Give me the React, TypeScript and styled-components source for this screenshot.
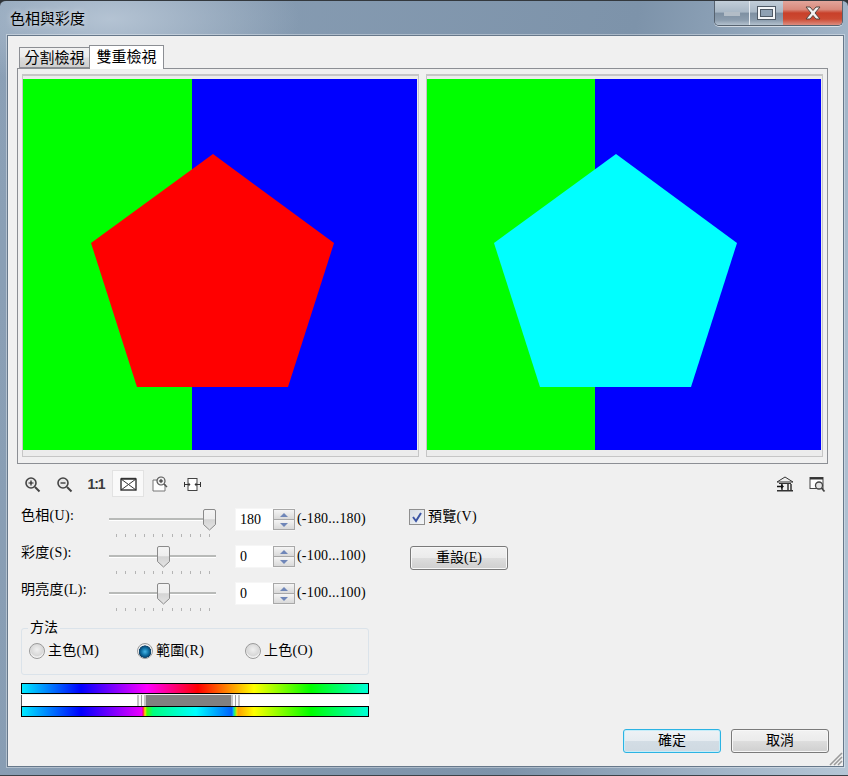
import React, { useId } from 'react'
import styled, { createGlobalStyle } from 'styled-components'

const GlobalStyle = createGlobalStyle`
  html, body { margin: 0; padding: 0; background: #2f3338; }
  body { font-family: "Liberation Serif", "Noto Sans CJK TC", serif; color: #000; }
`

const Win = styled.div`
  position: relative;
  width: 848px;
  height: 776px;
  box-sizing: border-box;
  padding: 0 5px 9px 8px;
  display: flex;
  flex-direction: column;
  border-top: 1px solid #33383d;
  border-bottom: 1px solid #3c4248;
  border-radius: 6px 6px 0 0;
  background:
    radial-gradient(ellipse 190px 70px at 110px 18px, #b4c3d3 0%, rgba(180,195,211,0) 100%),
    linear-gradient(100deg, #8ba0b6 0%, #7d93aa 65%, #a3b6c9 88%, #b5c6d6 100%);
`

const TitleBar = styled.div`
  height: 35px;
  flex: none;
  display: flex;
  justify-content: space-between;
  align-items: flex-start;
  margin-left: -8px;
  margin-right: -5px;
  padding: 0 5px 0 10px;
`

const Title = styled.div`
  font-size: 15px;
  line-height: 20px;
  margin-top: 8px;
  text-shadow: 0 0 6px rgba(255,255,255,.7);
`

const Caption = styled.div`
  display: flex;
  height: 25px;
  box-sizing: border-box;
  border: 1px solid #56626f;
  border-top: none;
  border-radius: 0 0 5px 5px;
  box-shadow: 0 1px 0 rgba(255,255,255,.6);
  overflow: hidden;
`

const CapBtn = styled.div<{ $w: number; $close?: boolean }>`
  width: ${(p) => p.$w}px;
  display: flex;
  align-items: center;
  justify-content: center;
  border-left: ${(p) => (p.$close ? 'none' : '1px solid #e4eaf0')};
  background: ${(p) =>
    p.$close
      ? 'linear-gradient(#e2a59b 0%, #d98a7c 35%, #c8402a 50%, #cc4a32 75%, #dc8d80 100%)'
      : 'linear-gradient(#c2ced9 0%, #a9b8c6 45%, #7f91a3 52%, #8c9dae 80%, #b4c2cf 100%)'};
  &:first-child { border-left: none; }
`

const MinGlyph = styled.div`
  width: 16px;
  height: 4px;
  margin-top: 2px;
  background: #b3bdc7;
`

const MaxGlyph = styled.div`
  width: 17px;
  height: 12px;
  box-sizing: border-box;
  border: 2px solid #f4f6f8;
  outline: 1px solid #4f5a66;
  box-shadow: inset 0 0 0 1px #4f5a66;
  background: #8fa1b3;
`

const Client = styled.div`
  flex: 1;
  display: flex;
  flex-direction: column;
  background: #f0f0f0;
  box-shadow: 0 0 0 1px #67788a, 0 0 0 2px rgba(255,255,255,.35);
  position: relative;
`

const Tabs = styled.div`
  display: flex;
  align-items: flex-end;
  height: 23px;
  margin: 9px 0 0 11px;
  position: relative;
  z-index: 1;
`

const Tab = styled.div<{ $active?: boolean }>`
  box-sizing: border-box;
  font-size: 15px;
  text-align: center;
  width: ${(p) => (p.$active ? 75 : 70)}px;
  height: ${(p) => (p.$active ? 24 : 21)}px;
  line-height: ${(p) => (p.$active ? 22 : 21)}px;
  margin-bottom: ${(p) => (p.$active ? -1 : 0)}px;
  border: 1px solid #8c8f94;
  border-bottom: ${(p) => (p.$active ? 'none' : '1px solid #8c8f94')};
  border-right: ${(p) => (p.$active ? '1px solid #8c8f94' : 'none')};
  background: ${(p) => (p.$active ? '#fff' : 'linear-gradient(#f2f2f2 0%, #ebebeb 45%, #dcdcdc 55%, #cfcfcf 100%)')};
`

const Panel = styled.div`
  box-sizing: border-box;
  width: 811px;
  height: 396px;
  margin-left: 9px;
  padding: 5px 0 0 4px;
  border: 1px solid #8c8f94;
  display: flex;
  gap: 7px;
`

const PreviewFrame = styled.div`
  box-sizing: border-box;
  width: 397px;
  height: 383px;
  padding: 3px 0 0 0;
  border: 1px solid #c6c6c6;
  border-top-width: 2px;
  background: #ececec;
`

const PreviewSvg = styled.svg`
  display: block;
  width: 394px;
  height: 371px;
`

const ToolRow = styled.div`
  display: flex;
  align-items: center;
  height: 27px;
  margin-top: 6px;
  padding: 0 10px 0 8px;
`

const ToolBtn = styled.div<{ $on?: boolean }>`
  width: 32px;
  height: 27px;
  display: flex;
  align-items: center;
  justify-content: center;
  box-sizing: border-box;
  font: 700 14px "Liberation Sans", sans-serif;
  letter-spacing: -1px;
  color: #3c3c3c;
  padding-top: 1px;
  background: ${(p) => (p.$on ? '#f9f9f9' : 'transparent')};
  border: ${(p) => (p.$on ? '1px solid #e2e2e2' : 'none')};
`

const Spacer = styled.div`
  flex: 1;
`

const Controls = styled.div`
  display: flex;
  margin: 11px 0 0 13px;
`

const LeftCol = styled.div`
  width: 348px;
  display: flex;
  flex-direction: column;
  gap: 14px;
`

const SliderRow = styled.div`
  height: 23px;
  display: flex;
  align-items: flex-start;
`

const Label = styled.div`
  width: 88px;
  font-size: 14px;
  line-height: 16px;
  letter-spacing: .3px;
`

const SliderBox = styled.div`
  position: relative;
  width: 107px;
  height: 30px;
  margin-right: 19px;
`

const Track = styled.div`
  height: 2px;
  margin-top: 10px;
  background: #b8bab8;
  border-bottom: 1px solid #fff;
`

const Ticks = styled.div`
  display: flex;
  justify-content: space-between;
  margin: 13px 6px 0 7px;
`

const Tick = styled.div`
  width: 1px;
  height: 3px;
  background: #b4b4b4;
`

const ThumbSvg = styled.svg`
  position: absolute;
  top: 1px;
`

const Spin = styled.div`
  box-sizing: border-box;
  width: 60px;
  height: 23px;
  display: flex;
  background: #fff;
  border: 1px solid #f6f6f6;
  border-right: none;
  font-size: 14px;
  line-height: 21px;
  padding-left: 4px;
`

const SpinValue = styled.div`
  flex: 1;
`

const SpinBtns = styled.div`
  width: 20px;
  display: flex;
  flex-direction: column;
  gap: 1px;
  border: 1px solid #a8a8a8;
  background: #a8a8a8;
`

const SpinBtn = styled.div<{ $up?: boolean }>`
  flex: 1;
  display: flex;
  align-items: center;
  justify-content: center;
  background: linear-gradient(#f5f5f5, #d9d9d9);
  &::after {
    content: "";
    border-left: 4px solid transparent;
    border-right: 4px solid transparent;
    ${(p) => (p.$up ? 'border-bottom: 4px solid #6f86b8;' : 'border-top: 4px solid #6f86b8;')}
  }
`

const RangeText = styled.div`
  font-size: 14px;
  line-height: 21px;
  margin-left: 2px;
  letter-spacing: .2px;
  white-space: nowrap;
`

const Group = styled.div`
  position: relative;
  box-sizing: border-box;
  width: 348px;
  height: 47px;
  margin-top: 15px;
  border: 1px solid #dbe3ea;
  border-radius: 3px;
  display: flex;
  align-items: flex-start;
  padding: 14px 0 0 7px;
`

const Legend = styled.div`
  position: absolute;
  top: -10px;
  left: 6px;
  padding: 0 2px;
  font-size: 14px;
  line-height: 17px;
  background: #f0f0f0;
`

const RadioItem = styled.div`
  width: 108px;
  display: flex;
  align-items: center;
  gap: 3px;
  font-size: 14px;
  line-height: 16px;
  letter-spacing: .3px;
`

const RadioDot = styled.div<{ $on?: boolean }>`
  width: 16px;
  height: 16px;
  flex: none;
  border-radius: 50%;
  box-sizing: border-box;
  border: 1px solid #9a9a9a;
  background: ${(p) =>
    p.$on
      ? 'radial-gradient(circle at 50% 55%, #46b6e8 0%, #0b6a9e 38%, #0d3f66 58%, #eef0f2 62%)'
      : 'radial-gradient(circle at 50% 40%, #f0f0f0 0%, #d8d8d8 55%, #f4f4f4 70%)'};
`

const RightCol = styled.div`
  margin-left: 40px;
  display: flex;
  flex-direction: column;
  align-items: flex-start;
`

const CheckRow = styled.div`
  display: flex;
  align-items: center;
  gap: 3px;
  font-size: 14px;
  line-height: 16px;
  letter-spacing: .3px;
  margin-top: 1px;
`

const CheckBox = styled.div`
  width: 16px;
  height: 16px;
  box-sizing: border-box;
  border: 1px solid #8f8f8f;
  background: linear-gradient(135deg, #d4dbe4, #f4f6f8);
  display: flex;
  align-items: center;
  justify-content: center;
`

const Btn = styled.div<{ $primary?: boolean }>`
  box-sizing: border-box;
  width: 98px;
  height: 24px;
  border-radius: 3px;
  border: 1px solid ${(p) => (p.$primary ? '#2bb3e3' : '#7a7a7a')};
  box-shadow: inset 0 0 0 1px ${(p) => (p.$primary ? '#c5edf9' : '#f7f7f7')};
  background: ${(p) =>
    p.$primary
      ? 'linear-gradient(#eef2f5 0%, #e6ecf1 48%, #d3dde5 52%, #cfd9e1 100%)'
      : 'linear-gradient(#f2f2f2 0%, #ebebeb 48%, #dddddd 52%, #cfcfcf 100%)'};
  font-size: 14px;
  line-height: 22px;
  text-align: center;
`

const ResetBtn = styled(Btn)`
  margin: 21px 0 0 1px;
`

const Bars = styled.div`
  width: 348px;
  margin: 8px 0 0 13px;
  display: flex;
  flex-direction: column;
`

const HueBar = styled.div<{ $grad: string }>`
  box-sizing: border-box;
  height: 11px;
  border: 1px solid #000;
  background: ${(p) => p.$grad};
`

const RangeTrack = styled.div`
  height: 11px;
  margin-top: 1px;
  background: #fff;
  border-left: 1px solid #555;
  box-sizing: border-box;
  position: relative;
`

const RangeFill = styled.div`
  position: absolute;
  top: 0;
  bottom: 0;
  left: 124px;
  width: 86px;
  background: #808080;
`

const RangeHandle = styled.div`
  position: absolute;
  top: 0;
  bottom: 0;
  width: 9px;
  background: linear-gradient(90deg, #c4c4c4 0 2px, #fafafa 2px 4px, #a0a0a0 4px 5px, #fafafa 5px 7px, #c4c4c4 7px 9px);
`

const Footer = styled.div`
  display: flex;
  justify-content: flex-end;
  gap: 10px;
  margin-top: 12px;
  padding-right: 14px;
`

const Grip = styled.svg`
  position: absolute;
  right: 0;
  bottom: 0;
`

const hueTop =
  'linear-gradient(90deg, #00eaff 0, #0000ff 59px, #ff00ff 125px, #ff0000 176px, #ffff00 232px, #00ff00 289px, #00ffd8 346px)'
const hueBottom =
  'linear-gradient(90deg, #00eaff 0, #0000ff 59px, #ee00ff 120px, #ff0050 121px, #ffe000 123px, #40ff00 125px, #00ff80 131px, #00ffff 174px, #0060ff 210px, #00b0ff 211px, #40ff40 213px, #ffd000 215px, #ffa000 216px, #ffff00 232px, #00ff00 289px, #00ffd8 346px)'

function Preview({ fill, shift = 0 }: { fill: string; shift?: number }) {
  return (
    <PreviewFrame>
      <PreviewSvg viewBox={`${shift} 0 394 371`}>
        <rect x="0" y="0" width="169" height="371" fill="#00ff00" />
        <rect x="169" y="0" width="226" height="371" fill="#0000ff" />
        <polygon points="190,75 311,164 265,308 114,308 68,164" fill={fill} />
      </PreviewSvg>
    </PreviewFrame>
  )
}

function ZoomIcon({ plus }: { plus?: boolean }) {
  return (
    <svg width="17" height="17" viewBox="0 0 17 17">
      <circle cx="7" cy="7" r="5" fill="#e8e8e8" stroke="#444" strokeWidth="1.6" />
      <path d="M11 11l4.5 4.5" stroke="#444" strokeWidth="2" />
      <path d={plus ? 'M4.5 7h5M7 4.5v5' : 'M4.5 7h5'} stroke="#222" strokeWidth="1.2" />
    </svg>
  )
}

function FitIcon() {
  return (
    <svg width="17" height="15" viewBox="0 0 17 15">
      <rect x="1" y="2" width="15" height="11" fill="#fff" stroke="#333" strokeWidth="1.4" />
      <path d="M1 2l7.500 5.500L16 2M1 13l7.500-5.500L16 13" fill="none" stroke="#333" />
      <path d="M1 1.500h15" stroke="#333" strokeWidth="1.400" />
    </svg>
  )
}

function ZoomRectIcon() {
  return (
    <svg width="18" height="18" viewBox="0 0 18 18">
      <path d="M2 5h6M2 5v11h12V9" fill="#fff" stroke="#777" />
      <circle cx="10" cy="6" r="4" fill="#eee" stroke="#555" strokeWidth="1.2" />
      <path d="M13 9l3 3" stroke="#555" strokeWidth="1.5" />
      <path d="M8 6h4M10 4v4" stroke="#222" />
    </svg>
  )
}

function SplitIcon() {
  return (
    <svg width="17" height="15" viewBox="0 0 17 15">
      <rect x="4" y="1.500" width="9" height="12" fill="#fff" stroke="#444" />
      <path d="M0.500 5v5M16.500 5v5M1 7.500h5M11 7.500h5" stroke="#333" />
      <path d="M6.500 7.500l-2-2v4zM10.500 7.500l2-2v4z" fill="#333" />
    </svg>
  )
}

function ExportIcon() {
  return (
    <svg width="18" height="17" viewBox="0 0 18 17">
      <path d="M9 1L1 6h16z" fill="#eee" stroke="#333" />
      <path d="M3 7h12v1H3zM1 14h16v1.500H1z" fill="#333" />
      <path d="M6 8v6M12 8v6M15 8v6" stroke="#333" strokeWidth="1.500" />
      <path d="M1 10.500h5" stroke="#111" strokeWidth="1.500" />
      <path d="M8 10.500l-3-2.500v5z" fill="#111" />
    </svg>
  )
}

function WindowZoomIcon() {
  return (
    <svg width="17" height="17" viewBox="0 0 17 17">
      <rect x="1" y="1.500" width="13" height="11" fill="#fff" stroke="#444" />
      <path d="M1 2.500h13" stroke="#333" strokeWidth="2" />
      <circle cx="10" cy="9.500" r="3.500" fill="#e4e4e4" stroke="#444" strokeWidth="1.300" />
      <path d="M12.500 12l3 3.500" stroke="#444" strokeWidth="1.800" />
    </svg>
  )
}

function SliderLine({ label, thumb, value, range }: { label: string; thumb: number; value: string; range: string }) {
  const gradId = useId()
  return (
    <SliderRow>
      <Label>{label}</Label>
      <SliderBox>
        <Track />
        <Ticks>
          {Array.from({ length: 11 }).map((_, i) => (
            <Tick key={i} />
          ))}
        </Ticks>
        <ThumbSvg width="13" height="22" viewBox="0 0 13 22" style={{ left: thumb - 6 }}>
          <defs>
            <linearGradient id={gradId} x1="0" y1="0" x2="0" y2="1">
              <stop offset="0" stopColor="#f4f4f4" />
              <stop offset="0.45" stopColor="#eeeeee" />
              <stop offset="0.5" stopColor="#d4d4d4" />
              <stop offset="1" stopColor="#e4e4e4" />
            </linearGradient>
          </defs>
          <path d="M2 0.500h9a1.500 1.500 0 0 1 1.500 1.500v13.500L6.500 21 0.500 15.500V2A1.500 1.500 0 0 1 2 0.500z" fill={`url(#${gradId})`} stroke="#8a8a8a" />
        </ThumbSvg>
      </SliderBox>
      <Spin>
        <SpinValue>{value}</SpinValue>
        <SpinBtns>
          <SpinBtn $up />
          <SpinBtn />
        </SpinBtns>
      </Spin>
      <RangeText>{range}</RangeText>
    </SliderRow>
  )
}

export default function App() {
  return (
    <>
      <GlobalStyle />
      <Win>
        <TitleBar>
          <Title>色相與彩度</Title>
          <Caption>
            <CapBtn $w={34}><MinGlyph /></CapBtn>
            <CapBtn $w={33}><MaxGlyph /></CapBtn>
            <CapBtn $w={59} $close>
              <svg width="18" height="14" viewBox="0 0 18 14">
                <path d="M2 1h4l3 3.500L12 1h4l-5 6 5 6h-4L9 9.500 6 13H2l5-6z" fill="#f2f2f2" stroke="#55453f" strokeWidth="1" />
              </svg>
            </CapBtn>
          </Caption>
        </TitleBar>
        <Client>
          <Tabs>
            <Tab>分割檢視</Tab>
            <Tab $active>雙重檢視</Tab>
          </Tabs>
          <Panel>
            <Preview fill="#ff0000" />
            <Preview fill="#00ffff" shift={1} />
          </Panel>
          <ToolRow>
            <ToolBtn><ZoomIcon plus /></ToolBtn>
            <ToolBtn><ZoomIcon /></ToolBtn>
            <ToolBtn>1:1</ToolBtn>
            <ToolBtn $on><FitIcon /></ToolBtn>
            <ToolBtn><ZoomRectIcon /></ToolBtn>
            <ToolBtn><SplitIcon /></ToolBtn>
            <Spacer />
            <ToolBtn><ExportIcon /></ToolBtn>
            <ToolBtn><WindowZoomIcon /></ToolBtn>
          </ToolRow>
          <Controls>
            <LeftCol>
              <SliderLine label="色相(U):" thumb={100} value="180" range="(-180...180)" />
              <SliderLine label="彩度(S):" thumb={54} value="0" range="(-100...100)" />
              <SliderLine label="明亮度(L):" thumb={54} value="0" range="(-100...100)" />
            </LeftCol>
            <RightCol>
              <CheckRow>
                <CheckBox>
                  <svg width="12" height="12" viewBox="0 0 12 12">
                    <path d="M2 6l3 4 5-8" fill="none" stroke="#3b55a5" strokeWidth="2" />
                  </svg>
                </CheckBox>
                預覽(V)
              </CheckRow>
              <ResetBtn>重設(E)</ResetBtn>
            </RightCol>
          </Controls>
          <Bars>
            <Group>
              <Legend>方法</Legend>
              <RadioItem><RadioDot />主色(M)</RadioItem>
              <RadioItem><RadioDot $on />範圍(R)</RadioItem>
              <RadioItem><RadioDot />上色(O)</RadioItem>
            </Group>
          </Bars>
          <Bars>
            <HueBar $grad={hueTop} />
            <RangeTrack>
              <RangeFill />
              <RangeHandle style={{ left: 115 }} />
              <RangeHandle style={{ left: 209 }} />
            </RangeTrack>
            <HueBar $grad={hueBottom} />
          </Bars>
          <Footer>
            <Btn $primary>確定</Btn>
            <Btn>取消</Btn>
          </Footer>
          <Grip width="14" height="14" viewBox="0 0 14 14">
            <path d="M13 1L1 13M13 5L5 13M13 9L9 13" stroke="#9a9a9a" strokeWidth="1.500" />
          </Grip>
        </Client>
      </Win>
    </>
  )
}
